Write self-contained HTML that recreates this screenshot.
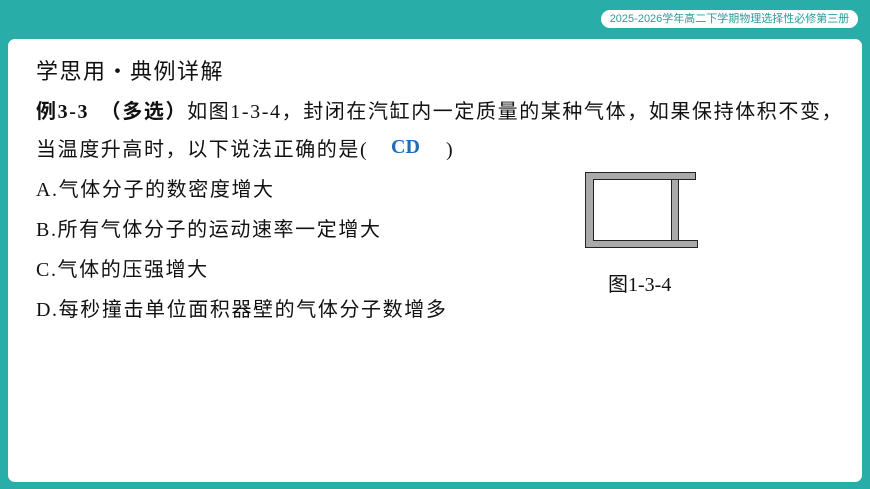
<!DOCTYPE html>
<html><head><meta charset="utf-8"><style>
body{margin:0;width:870px;height:489px;background:#28ada9;position:relative;overflow:hidden;font-family:"Liberation Serif","Noto Sans CJK SC",serif;}
.card{position:absolute;left:8px;top:39px;width:854px;height:443px;background:#fff;border-radius:7px;}
.pill{position:absolute;left:601px;top:10px;width:257px;height:18px;background:#fff;border-radius:9px;color:#2a9c98;font-size:11px;line-height:18px;text-align:center;font-family:"Liberation Sans","Noto Sans CJK SC",sans-serif;}
.t{position:absolute;left:36px;font-size:20px;line-height:24px;color:#111;white-space:nowrap;letter-spacing:1.6px;font-family:"Liberation Serif","Noto Sans CJK SC",sans-serif;}
b{font-weight:bold}
</style></head><body>
<div class="pill">2025-2026学年高二下学期物理选择性必修第三册</div>
<div class="card"></div>
<div class="t" style="top:57px;font-size:22px;line-height:26px;letter-spacing:1.5px;font-family:'Noto Sans CJK SC',sans-serif;">学思用·典例详解</div>
<div class="t" style="top:100px;"><b>例3-3</b>　<b>（多选）</b>如图1-3-4，封闭在汽缸内一定质量的某种气体，如果保持体积不变，</div>
<div class="t" style="top:138px;">当温度升高时，以下说法正确的是(<span style="position:absolute;left:355px;top:-3px;color:#1f6cb8;font-weight:bold;letter-spacing:0">CD</span><span style="position:absolute;left:410px;">)</span></div>
<div class="t" style="top:178px;">A.气体分子的数密度增大</div>
<div class="t" style="top:218px;">B.所有气体分子的运动速率一定增大</div>
<div class="t" style="top:258px;">C.气体的压强增大</div>
<div class="t" style="top:298px;">D.每秒撞击单位面积器壁的气体分子数增多</div>
<svg style="position:absolute;left:0;top:0" width="870" height="489">
<path d="M585.5 172.5 H695.5 V179.5 H593.5 V240.5 H697.5 V247.5 H585.5 Z" fill="#aaa" stroke="#222" stroke-width="1"/>
<rect x="671.5" y="179.5" width="7" height="61" fill="#aaa" stroke="#222" stroke-width="1"/>
</svg>
<div class="t" style="left:608px;top:273px;letter-spacing:0">图1-3-4</div>
</body></html>
